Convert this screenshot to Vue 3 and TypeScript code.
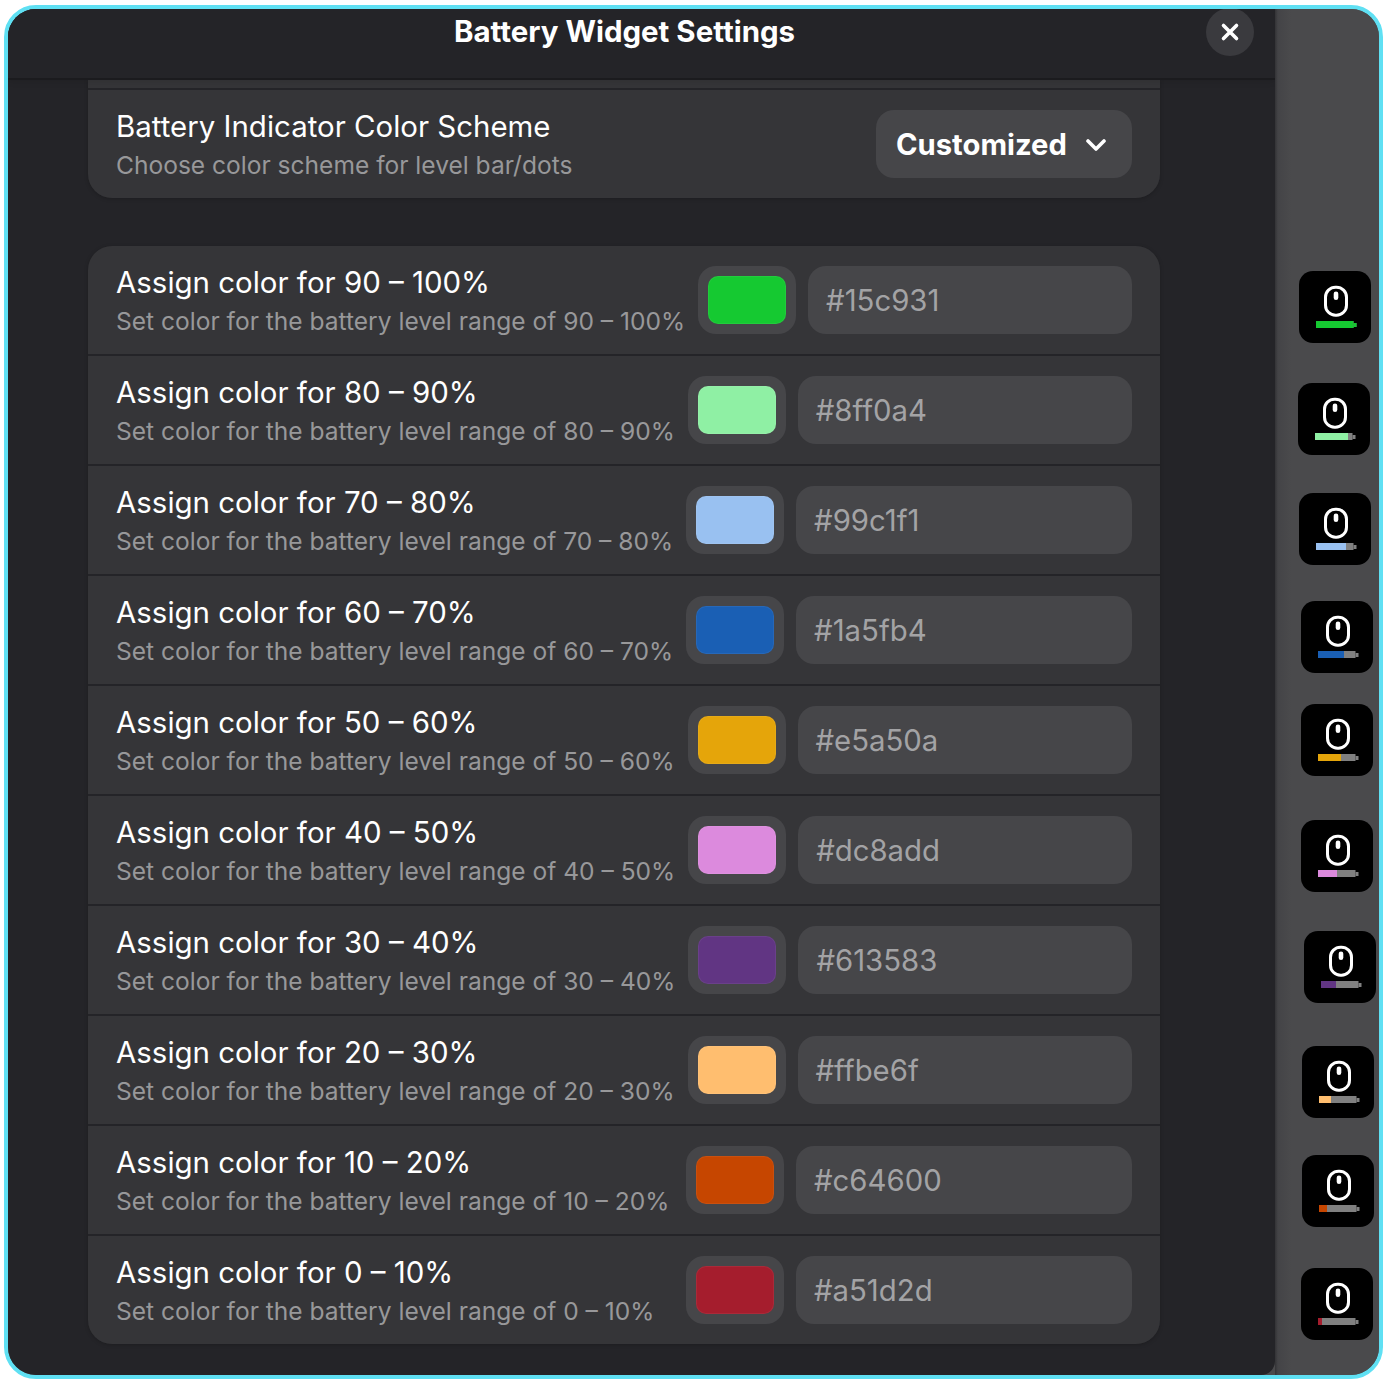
<script setup lang="ts">
interface Level {
  range: string;
  color: string;
  fill: number;
  iconX: number;
  iconY: number;
}

const levels: Level[] = [
  { range: '90 – 100%', color: '#15c931', fill: 37.5, iconX: 24, iconY: 262 },
  { range: '80 – 90%', color: '#8ff0a4', fill: 33, iconX: 23, iconY: 374 },
  { range: '70 – 80%', color: '#99c1f1', fill: 30, iconX: 24, iconY: 484 },
  { range: '60 – 70%', color: '#1a5fb4', fill: 26, iconX: 26, iconY: 592 },
  { range: '50 – 60%', color: '#e5a50a', fill: 23, iconX: 26, iconY: 695 },
  { range: '40 – 50%', color: '#dc8add', fill: 19, iconX: 26, iconY: 811 },
  { range: '30 – 40%', color: '#613583', fill: 15, iconX: 29, iconY: 922 },
  { range: '20 – 30%', color: '#ffbe6f', fill: 12, iconX: 27, iconY: 1037 },
  { range: '10 – 20%', color: '#c64600', fill: 8, iconX: 27, iconY: 1146 },
  { range: '0 – 10%', color: '#a51d2d', fill: 4, iconX: 26, iconY: 1259 },
];
</script>

<template>
  <div class="window">
    <div class="dialog">
      <header class="header">
        <h1 class="title">Battery Widget Settings</h1>
        <button class="close" type="button" aria-label="Close">
          <svg width="20" height="20" viewBox="0 0 20 20">
            <path d="M3.5 3.5L16.5 16.5M16.5 3.5L3.5 16.5" stroke="#fff" stroke-width="3.6" stroke-linecap="round" />
          </svg>
        </button>
      </header>

      <main class="body">
        <section class="card card-top">
          <div class="stub"></div>
          <div class="row">
            <div class="label">
              <div class="row-title">Battery Indicator Color Scheme</div>
              <div class="row-sub">Choose color scheme for level bar/dots</div>
            </div>
            <button class="dropdown" type="button">
              <span>Customized</span>
              <svg class="chevron" width="20" height="12" viewBox="0 0 20 12">
                <path d="M2 2L10 10L18 2" fill="none" stroke="#fff" stroke-width="3.6" stroke-linecap="round" stroke-linejoin="round" />
              </svg>
            </button>
          </div>
        </section>

        <section class="card">
          <div v-for="level in levels" :key="level.color" class="row">
            <div class="label">
              <div class="row-title">Assign color for {{ level.range }}</div>
              <div class="row-sub">Set color for the battery level range of {{ level.range }}</div>
            </div>
            <div class="swatch">
              <div class="swatch-color" :style="{ backgroundColor: level.color }"></div>
            </div>
            <div class="hex">{{ level.color }}</div>
          </div>
        </section>
      </main>
    </div>

    <aside class="strip">
      <svg
        v-for="level in levels"
        :key="level.color"
        class="tray-icon"
        :style="{ left: level.iconX + 'px', top: level.iconY + 'px' }"
        width="72"
        height="72"
        viewBox="0 0 72 72"
      >
        <rect width="72" height="72" rx="14" fill="#000" />
        <rect x="26.5" y="16.2" width="21" height="28" rx="10" fill="none" stroke="#fff" stroke-width="3" />
        <rect x="34.7" y="20.5" width="4.6" height="8.5" rx="2.3" fill="#fff" />
        <rect x="17" y="50" width="37.5" height="7" fill="#808080" />
        <rect x="54.5" y="52" width="3" height="4" fill="#808080" />
        <rect x="17" y="50" :width="level.fill" height="7" :fill="level.color" />
        <rect v-if="level.fill === 37.5" x="54.5" y="52" width="3" height="4" :fill="level.color" />
      </svg>
    </aside>
  </div>
</template>

<style>
html,
body {
  background: #fff;
}
</style>

<style scoped>
.window {
  display: flex;
  position: relative;
  box-sizing: border-box;
  width: 1379px;
  height: 1374px;
  margin: 5px 0 0 4px;
  border: 4px solid #5fe0f3;
  border-radius: 32px;
  overflow: hidden;
  background: #4a4a4c;
  font-family: Inter, "Liberation Sans", sans-serif;
}

.dialog {
  display: flex;
  flex-direction: column;
  flex: none;
  width: 1267px;
  background: #242428;
  border-bottom-right-radius: 14px;
  overflow: hidden;
}

.header {
  display: flex;
  flex: none;
  position: relative;
  z-index: 1;
  box-sizing: border-box;
  height: 71px;
  padding-right: 34px;
  background: #242428;
  border-bottom: 2px solid #1b1b1e;
  box-shadow: 0 2px 6px rgba(0, 0, 0, 0.1);
}

.title {
  flex: 1;
  margin: 0;
  padding-top: 4px;
  text-align: center;
  font-size: 29.45px;
  line-height: 36px;
  font-weight: 700;
  color: #fff;
}

.close {
  display: flex;
  position: absolute;
  top: -1px;
  right: 21px;
  align-items: center;
  justify-content: center;
  width: 48px;
  height: 48px;
  padding: 0;
  border: none;
  border-radius: 50%;
  background: #3a3a3e;
}

.body {
  flex: 1;
  padding: 0 115px 0 80px;
  overflow: hidden;
}

.card {
  display: flex;
  flex-direction: column;
  gap: 2px;
  margin-bottom: 48px;
  border-radius: 24px;
  background: #242428;
  box-shadow: 0 1px 4px rgba(0, 0, 0, 0.2);
  overflow: hidden;
}

.card-top {
  border-top-left-radius: 0;
  border-top-right-radius: 0;
}

.stub {
  height: 8px;
  background: #353538;
}

.row {
  display: flex;
  align-items: center;
  box-sizing: border-box;
  height: 108px;
  padding: 0 28px;
  background: #353538;
}

.label {
  flex: none;
  margin-right: auto;
  padding-top: 2px;
}

.row-title {
  font-size: 29.45px;
  line-height: 41px;
  color: #fff;
}

.row-sub {
  font-size: 24.55px;
  line-height: 37px;
  color: #98989a;
}

.dropdown {
  display: flex;
  flex: none;
  align-items: center;
  justify-content: space-between;
  box-sizing: border-box;
  width: 256px;
  height: 68px;
  padding: 0 26px 0 20px;
  border: none;
  border-radius: 18px;
  background: #464649;
  font-family: inherit;
  font-size: 29.2px;
  font-weight: 700;
  color: #fff;
}

.chevron {
  margin-top: 2px;
}

.swatch {
  flex: none;
  box-sizing: border-box;
  width: 98px;
  height: 68px;
  margin-left: 13px;
  padding: 10px;
  border-radius: 18px;
  background: #464649;
}

.swatch-color {
  height: 100%;
  border-radius: 10px;
  box-shadow: inset 0 0 0 1px rgba(255, 255, 255, 0.06);
}

.hex {
  flex: 1 1 0;
  box-sizing: border-box;
  max-width: 336px;
  height: 68px;
  margin-left: 12px;
  padding: 0 18px;
  border-radius: 18px;
  background: #464649;
  font-size: 29.33px;
  line-height: 69px;
  color: #a3a3a5;
}

.strip {
  flex: 1;
  position: relative;
  background: linear-gradient(90deg, #333336 0, #444447 3px, #4a4a4c 16px);
}

.tray-icon {
  position: absolute;
}
</style>
